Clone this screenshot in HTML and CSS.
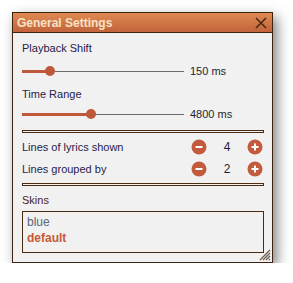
FILE: index.html
```html
<!DOCTYPE html>
<html>
<head>
<meta charset="utf-8">
<link rel="stylesheet" href="styles.css">
</head>
<body>
<div class="window">
  <div class="titlebar">
    <span class="title">General Settings</span>
    <svg class="close" width="12" height="12" viewBox="0 0 12 12"><path d="M1 1 L11 11 M11 1 L1 11" stroke="#4a2a14" stroke-width="1.6" fill="none"/></svg>
  </div>
  <div class="content">
    <div class="label">Playback Shift</div>
    <div class="slider-row s1">
      <div class="slider">
        <div class="fill" style="width:28px"></div>
        <div class="thumb"></div>
        <div class="track"></div>
      </div>
      <span class="value">150 ms</span>
    </div>
    <div class="label l2">Time Range</div>
    <div class="slider-row s2">
      <div class="slider">
        <div class="fill" style="width:69px"></div>
        <div class="thumb"></div>
        <div class="track"></div>
      </div>
      <span class="value">4800 ms</span>
    </div>
    <div class="sep"></div>
    <div class="stepper-row r1">
      <span class="slabel">Lines of lyrics shown</span>
      <span class="btn"><svg width="16" height="16" viewBox="0 0 16 16"><circle cx="8" cy="8" r="7.5" fill="#c25a3c"/><path d="M4.5 8 H11.5" stroke="#fff" stroke-width="2"/></svg></span>
      <span class="num">4</span>
      <span class="btn"><svg width="16" height="16" viewBox="0 0 16 16"><circle cx="8" cy="8" r="7.5" fill="#c25a3c"/><path d="M4.5 8 H11.5 M8 4.5 V11.5" stroke="#fff" stroke-width="2"/></svg></span>
    </div>
    <div class="stepper-row r2">
      <span class="slabel">Lines grouped by</span>
      <span class="btn"><svg width="16" height="16" viewBox="0 0 16 16"><circle cx="8" cy="8" r="7.5" fill="#c25a3c"/><path d="M4.5 8 H11.5" stroke="#fff" stroke-width="2"/></svg></span>
      <span class="num">2</span>
      <span class="btn"><svg width="16" height="16" viewBox="0 0 16 16"><circle cx="8" cy="8" r="7.5" fill="#c25a3c"/><path d="M4.5 8 H11.5 M8 4.5 V11.5" stroke="#fff" stroke-width="2"/></svg></span>
    </div>
    <div class="sep sep2"></div>
    <div class="skins-label">Skins</div>
    <div class="list">
      <div class="item">blue</div>
      <div class="item selected">default</div>
    </div>
  </div>
  <svg class="grip" width="12" height="12" viewBox="0 0 12 12">
    <path d="M11 1 L1 11 M11 4 L4 11 M11 7 L7 11 M11 10 L10 11" stroke="#6a5a4a" stroke-width="1.2" fill="none"/>
  </svg>
</div>
</body>
</html>
```

FILE: styles.css
```css
html, body {
  margin: 0;
  padding: 0;
  background: #ffffff;
}
body {
  font-family: "Liberation Sans", Arial, sans-serif;
  font-size: 11px;
}
.window {
  position: relative;
  margin: 12px 0 0 12px;
  width: 259px;
  height: 249px;
  border: 1px solid #3e2410;
  background: #f1f1f1;
  box-shadow: 4px 5px 12px rgba(0, 0, 0, 0.5);
  display: flex;
  flex-direction: column;
}
.titlebar {
  height: 19px;
  border-bottom: 1px solid #3e2410;
  background: linear-gradient(#e08a52, #c2633c);
  display: flex;
  align-items: center;
  justify-content: space-between;
  padding: 0 5px 0 4px;
}
.title {
  color: #f8e2c6;
  font-weight: bold;
  font-size: 12px;
  padding-top: 1px;
}
.close {
  display: block;
  margin-top: 1px;
}
.content {
  padding: 5px 8px 0 9px;
  display: flex;
  flex-direction: column;
  color: #27224a;
}
.label {
  height: 20px;
  line-height: 20px;
}
.l2 {
  height: 19px;
}
.slider-row {
  display: flex;
  align-items: center;
}
.s1 { height: 26px; }
.s2 { height: 22px; }
.slider {
  position: relative;
  width: 162px;
  height: 10px;
  display: flex;
  align-items: center;
}
.track {
  flex: 1;
  height: 1px;
  background: #6b6b6b;
}
.fill {
  height: 3px;
  background: #bf583a;
}
.thumb {
  width: 10px;
  height: 10px;
  border-radius: 50%;
  background: #bf583a;
  margin-left: -5px;
  margin-right: -5px;
  position: relative;
}
.value {
  margin-left: 6px;
  color: #231e30;
}
.sep {
  margin-top: 5px;
  height: 1px;
  border: 1px solid #4a2c14;
}
.stepper-row {
  display: flex;
  align-items: center;
  height: 22px;
}
.r1 { margin-top: 3px; }
.slabel {
  width: 169px;
}
.btn {
  width: 16px;
  height: 16px;
  display: block;
}
.btn svg { display: block; }
.num {
  width: 40px;
  text-align: center;
  color: #1e1e3a;
  font-size: 12px;
}
.sep2 {
  margin-top: 3px;
}
.skins-label {
  margin-top: 5px;
  height: 18px;
  line-height: 18px;
  color: #4a1c1c;
}
.list {
  margin-top: 2px;
  height: 36px;
  border: 1px solid #4a2c14;
  padding: 2px 4px;
  font-size: 12px;
}
.item {
  height: 16px;
  line-height: 16px;
  color: #5c6478;
}
.item.selected {
  color: #c65a38;
  font-weight: bold;
}
.grip {
  position: absolute;
  right: 1px;
  bottom: 1px;
}
```
